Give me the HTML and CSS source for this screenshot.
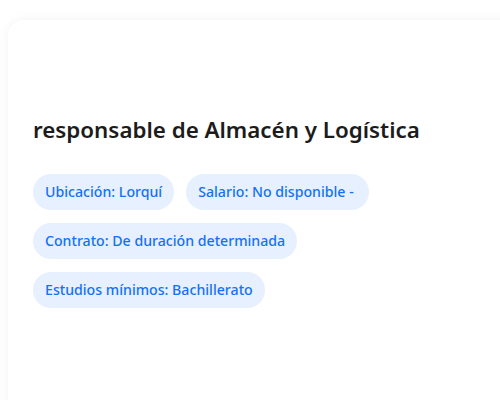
FILE: index.html
```html
<!DOCTYPE html>
<html lang="es">
<head>
<meta charset="utf-8">
<link rel="stylesheet" href="styles.css">
</head>
<body>
<div class="card">
  <h2 class="title">responsable de Almacén y Logística</h2>
  <div class="tags">
    <span class="tag">Ubicación: Lorquí</span>
    <span class="tag">Salario: No disponible -&nbsp;</span>
    <span class="tag">Contrato: De duración determinada</span>
    <span class="tag">Estudios mínimos: Bachillerato</span>
  </div>
</div>
</body>
</html>
```
FILE: styles.css
```css
html, body { margin: 0; padding: 0; background: #fff; }
body {
  padding: 20px 0 0 8px;
  font-family: "Noto Sans", "Open Sans", sans-serif;
  overflow: hidden;
  height: 400px;
  box-sizing: border-box;
}
.card {
  background: #fff;
  border-radius: 16px;
  box-shadow: 0 0 12px rgba(0,0,0,0.05);
  padding: 95px 24px 100px 25px;
  width: 560px;
  min-height: 400px;
}
.title {
  margin: 0 0 29px;
  font-size: 22.35px;
  font-weight: 600;
  color: #1c1c1c;
  line-height: 30px;
}
.tags {
  display: flex;
  flex-wrap: wrap;
  gap: 13px 12px;
  width: 360px;
}
.tag {
  display: inline-block;
  background: #e6f0fe;
  color: #1470f7;
  font-size: 14.15px;
  font-weight: 500;
  line-height: 20px;
  padding: 8px 12px;
  border-radius: 18px;
}
```
